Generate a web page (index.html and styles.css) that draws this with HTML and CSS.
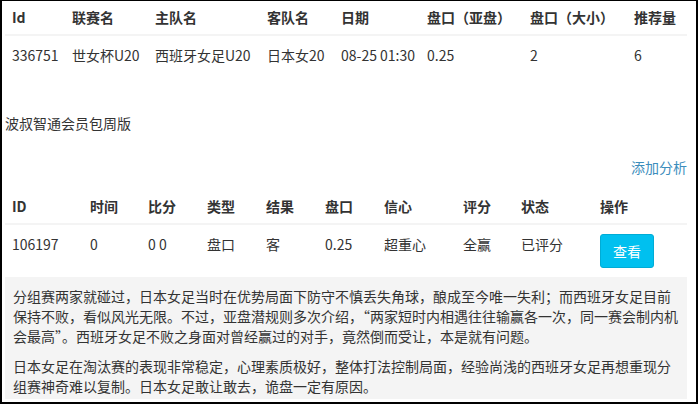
FILE: index.html
```html
<!DOCTYPE html>
<html lang="zh-CN">
<head>
  <meta charset="UTF-8">
  <meta name="viewport" content="width=device-width, initial-scale=1.0">
  <title>推荐详情</title>
  <link rel="stylesheet" href="styles.css">
</head>
<body>
  <div class="page">
    <table class="tabela jogo">
      <thead>
        <tr>
          <th>Id</th>
          <th>联赛名</th>
          <th>主队名</th>
          <th>客队名</th>
          <th>日期</th>
          <th>盘口（亚盘）</th>
          <th>盘口（大小）</th>
          <th>推荐量</th>
        </tr>
      </thead>
      <tbody>
        <tr>
          <td>336751</td>
          <td>世女杯U20</td>
          <td>西班牙女足U20</td>
          <td>日本女20</td>
          <td>08-25 01:30</td>
          <td>0.25</td>
          <td>2</td>
          <td>6</td>
        </tr>
      </tbody>
    </table>

    <div class="pacote">波叔智通会员包周版</div>

    <div class="acoes">
      <a href="#" class="link">添加分析</a>
    </div>

    <table class="tabela analise">
      <thead>
        <tr>
          <th>ID</th>
          <th>时间</th>
          <th>比分</th>
          <th>类型</th>
          <th>结果</th>
          <th>盘口</th>
          <th>信心</th>
          <th>评分</th>
          <th>状态</th>
          <th>操作</th>
        </tr>
      </thead>
      <tbody>
        <tr>
          <td>106197</td>
          <td>0</td>
          <td>0 0</td>
          <td>盘口</td>
          <td>客</td>
          <td>0.25</td>
          <td>超重心</td>
          <td>全赢</td>
          <td>已评分</td>
          <td><button class="btn">查看</button></td>
        </tr>
      </tbody>
    </table>

    <div class="texto">
      <p>分组赛两家就碰过，日本女足当时在优势局面下防守不慎丢失角球，酿成至今唯一失利；而西班牙女足目前保持不败，看似风光无限。不过，亚盘潜规则多次介绍，“两家短时内相遇往往输赢各一次，同一赛会制内机会最高”。西班牙女足不败之身面对曾经赢过的对手，竟然倒而受让，本是就有问题。</p>
      <p>日本女足在淘汰赛的表现非常稳定，心理素质极好，整体打法控制局面，经验尚浅的西班牙女足再想重现分组赛神奇难以复制。日本女足敢让敢去，诡盘一定有原因。</p>
    </div>
  </div>
</body>
</html>
```

FILE: styles.css
```css
* {
  box-sizing: border-box;
  margin: 0;
  padding: 0;
}

body {
  background: white;
  font-family: "Noto Sans CJK SC", "Liberation Sans", sans-serif;
  font-size: 14px;
  line-height: 20px;
  color: #333;
}

.page {
  width: 698px;
  height: 404px;
  border-style: solid;
  border-color: #000;
  border-width: 1px 2px 2px 2px;
  padding: 0 9px 0 3px;
  overflow: hidden;
}

.tabela {
  width: 100%;
  border-collapse: collapse;
  table-layout: fixed;
}

.tabela th {
  text-align: left;
  font-weight: 700;
  padding: 6px 7px 7px;
  border-bottom: 2px solid #f4f4f4;
  white-space: nowrap;
}

.tabela td {
  text-align: left;
  vertical-align: top;
  padding: 9px 7px;
  white-space: nowrap;
}

.jogo th:nth-child(1) { width: 60px; }
.jogo th:nth-child(2) { width: 83px; }
.jogo th:nth-child(3) { width: 112px; }
.jogo th:nth-child(4) { width: 74px; }
.jogo th:nth-child(5) { width: 86px; }
.jogo th:nth-child(6) { width: 103px; }
.jogo th:nth-child(7) { width: 104px; }
.jogo th:nth-child(8) { width: 60px; }

.analise th:nth-child(1) { width: 78px; }
.analise th:nth-child(2) { width: 58px; }
.analise th:nth-child(3) { width: 59px; }
.analise th:nth-child(4) { width: 59px; }
.analise th:nth-child(5) { width: 59px; }
.analise th:nth-child(6) { width: 59px; }
.analise th:nth-child(7) { width: 79px; }
.analise th:nth-child(8) { width: 58px; }
.analise th:nth-child(9) { width: 79px; }
.analise th:nth-child(10) { width: 94px; }

.pacote {
  margin-top: 39px;
}

.acoes {
  margin-top: 24px;
  text-align: right;
}

.link {
  color: #3c8dbc;
  text-decoration: none;
}

.analise {
  margin-top: 13px;
}

.btn {
  font-family: inherit;
  font-size: 14px;
  line-height: 20px;
  padding: 6px 12px;
  color: white;
  background-color: #00c0ef;
  border: 1px solid #00acd6;
  border-radius: 3px;
  cursor: pointer;
}

.texto {
  background: #f4f4f4;
  padding: 9px 7px 3px 8px;
}

.texto p {
  margin-bottom: 10px;
}

.texto p:last-child {
  margin-bottom: 0;
}
```
